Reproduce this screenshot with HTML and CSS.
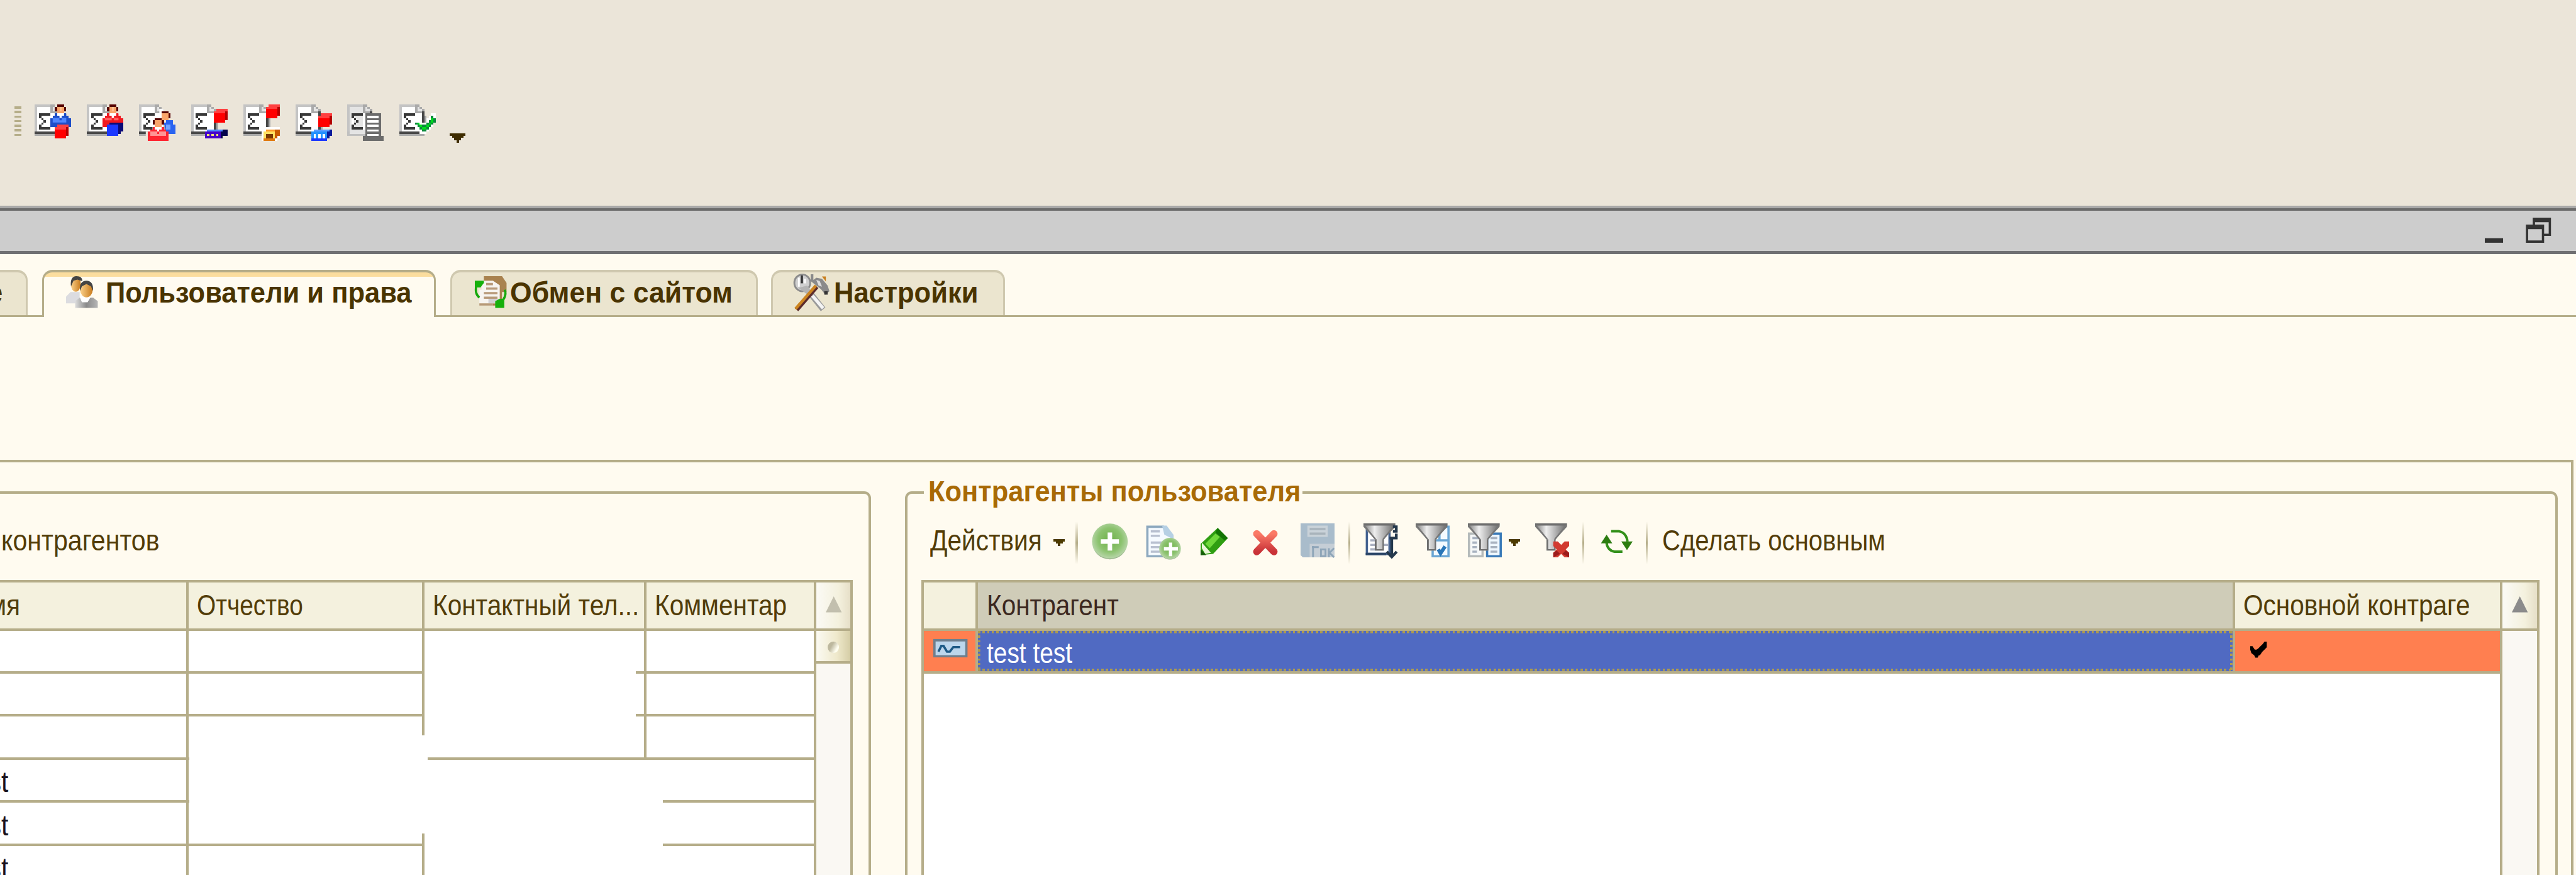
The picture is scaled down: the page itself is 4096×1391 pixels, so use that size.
FILE: index.html
```html
<!DOCTYPE html>
<html lang="ru">
<head>
<meta charset="utf-8">
<title>Пользователи и права</title>
<link rel="stylesheet" href="styles.css">
</head>
<body>
<svg class="defs" aria-hidden="true">
  <defs>
    <linearGradient id="metal" x1="0" x2="1" y1="0" y2="0"><stop offset="0" stop-color="#777"/><stop offset=".35" stop-color="#eee"/><stop offset=".6" stop-color="#bbb"/><stop offset="1" stop-color="#666"/></linearGradient>
    <radialGradient id="green" cx=".5" cy=".45" r=".6"><stop offset="0" stop-color="#6fb04a"/><stop offset=".55" stop-color="#8cc36f"/><stop offset=".85" stop-color="#b4d4a4"/><stop offset="1" stop-color="#55664f"/></radialGradient>
    <linearGradient id="red" x1="0" x2="0" y1="0" y2="1"><stop offset="0" stop-color="#fb7a66"/><stop offset="1" stop-color="#c93238"/></linearGradient>
    <linearGradient id="face" x1="0" x2="1" y1="0" y2="0"><stop offset="0" stop-color="#fbd28d"/><stop offset="1" stop-color="#c97b1c"/></linearGradient>
    <linearGradient id="coat" x1="0" x2="1" y1="0" y2="0"><stop offset="0" stop-color="#ddd"/><stop offset=".5" stop-color="#8a8a8a"/><stop offset="1" stop-color="#b5b5b5"/></linearGradient>
    <g id="sheet" shape-rendering="crispEdges">
      <path fill="#fff" d="M1 1h7v3h2v8H1z"/>
      <path fill="#c4c4c4" d="M0 0h9v1H1v11H0z"/>
      <path fill="#aaa" d="M7 0h1v3h3v1H7zM8 0h1v1H8zM9 1h1v1H9zM10 2h1v1h-1zM0 13h11v1H0z"/>
      <path fill="#e4e4e4" d="M8 1h1v1h1v1H8z"/>
      <path fill="#484848" d="M0 12h10v1H0zM10 3h1v9h-1z"/>
      <path fill="#aaa" d="M11 5h1v7h-1z"/>
      <path fill="#383838" d="M2 4h5v1H3v1H2zM3 6h1v1H3zM4 7h1v1H4zM3 8h1v1H3zM2 9h1v1h4v1H2z"/>
    </g>
    <g id="head" shape-rendering="crispEdges">
      <path fill="#fff" d="M10 4h3v2h-3z"/>
      <path fill="#f9a56b" d="M10 1h3v3h-3z"/><path fill="#ffc08e" d="M11 1h1v2h-1z"/>
      <path fill="#560000" d="M10 0h3v1h-3zM9 1h1v2H9zM13 1h1v2h-1z"/>
    </g>
    <path id="torso" shape-rendering="crispEdges" d="M8 5h1V4h1v1h1v1h1V5h1V4h1v1h1v1h1v4H7V6h1z"/>
    <g id="cube" shape-rendering="crispEdges"><path fill="#f00" d="M0 2h5v4H0z"/><path fill="#ff4040" d="M1 0h5v1H5v1H0V1h1z"/><path fill="#b40000" d="M5 1h1v4H5z"/></g>
    <g id="funnel">
      <path fill="url(#metal)" d="M0 0h14v1.5L9 7v5H5V7L0 1.5z"/><path fill="#6e6e6e" d="M0 0h14v1H0zM5 7h.8v5H5zM8.4 7H9v5h-.6zM5 11.4h4v.6H5z"/>
      <path fill="none" stroke="#777" stroke-width=".7" d="M.3 1l5 6M13.7 1l-5 6"/>
    </g>
  </defs>
</svg>

<header class="commands">
  <span class="grip"></span>
  <svg class="ico" viewBox="0 0 16 16"><use href="#sheet"/><use href="#torso" fill="#1d4ec8"/><use href="#head"/><path fill="#1d4ec8" d="M9 4h1v1h1v1h1V5h1V4h1v3H9z"/><path fill="#4f86ff" d="M8 6h3v1h1V6h2v2H8z"/><use href="#cube" x="9" y="9"/></svg>
  <svg class="ico" viewBox="0 0 16 16"><use href="#sheet"/><use href="#torso" fill="#f01820"/><use href="#head"/><path fill="#f01820" d="M9 4h1v1h1v1h1V5h1V4h1v3H9z"/><path fill="#ff6060" d="M8 6h3v1h1V6h2v1H8z"/><g shape-rendering="crispEdges"><path fill="#0a0a78" d="M10 8h6v4h-1v1h-1V9h-4z"/><path fill="#1c38ff" d="M9 9h5v5H9z"/></g></svg>
  <svg class="ico" viewBox="0 0 16 16"><use href="#sheet"/><path fill="#ebe5d9" d="M10 3h6v4h-2v-1h-4zM3 12h3v2H3zM11 6h3v2h-3z"/><path fill="#fff" d="M9 2h2v2H9zM6 7h5v6H6z"/><g shape-rendering="crispEdges"><path fill="#f9a56b" d="M10 4h3v3h-3zM7 7h3v3H7z"/><path fill="#560000" d="M10 3h3v1h1v2h-1V4h-3zM7 6h3v1h1v2h-1V7H7v2H6V7h1z"/><path fill="#2a64f0" d="M11 8h1V7h3v2h1v4h-4z"/><path fill="#75a4ff" d="M12 9h2v2h-2z"/><path fill="#ff2430" d="M5 11h1v-1h1v1h1v1h1v-1h1v-1h1v1h1v1h1v4H4v-4h1z"/><path fill="#ff9494" d="M5 12h3v1h1v-1h3v2H5z"/></g></svg>
  <svg class="ico" viewBox="0 0 16 16"><use href="#sheet"/><use href="#cube" x="10" y="2"/><g shape-rendering="crispEdges"><path fill="#4c86ff" d="M7 11h7v1H7z"/><path fill="#04044c" d="M14 11h2v3h-2v1h-1v-3h1z"/><path fill="#4600c8" d="M6 12h7v3H6z"/><path fill="#ffe070" d="M7 13h1v1H7zM9 13h1v1H9zM11 13h1v1h-1z"/></g></svg>
  <svg class="ico" viewBox="0 0 16 16"><use href="#sheet"/><use href="#cube" x="10"/><g shape-rendering="crispEdges"><path fill="#fff" d="M9 10h7v5h-1v1H8v-4h1z"/><path fill="#c85a00" d="M10 11h6v3h-1v1h-1v1H9v-4h1z"/><path fill="#ff9a28" d="M10 11h4v1h-4z"/><path fill="#ffe060" d="M9 12h5v3H9z"/><path fill="#7a3800" d="M10 13h3v2h-3z"/><path fill="#e07a10" d="M9 15h5v1H9z"/></g></svg>
  <svg class="ico" viewBox="0 0 16 16"><use href="#sheet"/><use href="#cube" x="10" y="4"/><g shape-rendering="crispEdges"><path fill="#0a1c9c" d="M14 11h2v3h-1v1h-1z"/><path fill="#5a9cff" d="M8 11h7v1H8z"/><path fill="#2492ff" d="M7 12h7v3H7z"/><path fill="#fff" d="M8 13h1v2H8zM10 13h1v2h-1zM12 13h1v2h-1z"/><path fill="#1c38ff" d="M7 15h7v1H7z"/></g></svg>
  <svg class="ico" viewBox="0 0 16 16"><use href="#sheet"/><g shape-rendering="crispEdges"><path fill="#e4e4e4" d="M1 1h6v3H2v7h6v1H1zM3 5h4v5H3z"/><path fill="#383838" d="M2 4h5v1H3v1H2zM3 6h1v1H3zM4 7h1v1H4zM3 8h1v1H3zM2 9h1v1h4v1H2z"/><path fill="#c0c0c0" d="M0 12h8v2H0z"/><path fill="#e4e4e4" d="M1 12h7v1H1z"/><path fill="#6c6c6c" d="M8 4h7v10h1v2H7v-2h1z"/><path fill="#fff" d="M9 5h5v1H9zM9 7h5v1H9zM9 9h5v1H9zM9 11h5v1H9zM9 13h5v1H9z"/></g></svg>
  <svg class="ico" viewBox="0 0 16 16"><use href="#sheet"/><g shape-rendering="crispEdges"><path fill="#fff" d="M6 7h3v1h3V6h1V5h1V4h2v4h-1v2h-1v1h-1v1h-1v1H9v-1H8v-1H7v-1H6z"/><path fill="#088a3a" d="M14 5h1v1h1v2h-1v1h-1v1h-1v1h-1v1h-2v-1H9v-1H8V9H7V8h2v1h3V8h1V7h1z"/><path fill="#00dc1e" d="M14 6h1v2h-1v1h-1v1h-1v1h-2v-1H9V9H8V8h1v1h1v1h2V9h1V8h1z"/></g></svg>
  <svg class="more" viewBox="0 0 7 4" shape-rendering="crispEdges"><path fill="#3e2c00" d="M0 0h7v1H6v1H5v1H4v1H3V3H2V2H1V1H0z"/></svg>
</header>

<div class="titlebar">
  <svg class="win" viewBox="0 0 116 44"><path fill="#333" d="M0 36h32v8H0z"/><path fill="#333" fill-rule="evenodd" d="M84 0h32v32h-12v-4h8V8H88v4h-4zM72 12h32v32H72zM76 20v20h24V20z"/></svg>
</div>

<main class="workspace">
  <nav class="tabs">
    <div class="tab tab-first"><span class="text bold">Общие</span></div>
    <div class="tab tab-active">
      <svg class="tabico small" viewBox="0 0 14 14"><path fill="#dcdce0" d="M0 9l2-2h4v5H0z"/><ellipse cx="4.300" cy="3.500" rx="2.200" ry="3.400" fill="url(#face)"/><path fill="#444" d="M2.200 4.500C1.800 1.500 2.800 0 4.600 0s2.600.8 2.600 2.200L5 1.500 3.300 2z"/><path fill="url(#coat)" d="M4 14v-3l2-1.500h6l2 1.500v3z"/><path fill="#fff" d="M6 9h5l-1.500 2.500H7z"/><ellipse cx="9" cy="5.800" rx="2.800" ry="3.600" fill="url(#face)"/><path fill="#444" d="M6.200 6.500C5.800 3.500 7 2 9 2s3.200 1.500 2.900 4.500L11 4.500 9 3.500l-2 1z"/></svg>
      <span class="text bold">Пользователи и права</span>
    </div>
    <div class="tab tab-exchange">
      <svg class="tabico small" viewBox="0 0 14 14"><path fill="#a9824f" d="M4 0h8l2 3v4h-2v6H8V3H4z"/><path fill="#f7f4f0" d="M3 2h5l3 2v8H2V6h1z"/><path fill="#d2d0d4" d="M6 10h5v2H6z"/><path stroke="#b89a7a" d="M5 3.500h3M5 5.500h5M4 7.500h6M4 9.500h6M2 12.500h6"/><path fill="none" stroke="#16a80c" d="M2 9.500C.3 8 .3 6.500.6 4M13.200 6c.6 1.500.3 3-.7 4.500"/><path fill="#16b00c" d="M0 2h4v1L2.500 5H0zM13 14H9v-3l2-1h2z"/></svg>
      <span class="text bold">Обмен с сайтом</span>
    </div>
    <div class="tab tab-settings">
      <svg class="tabico" viewBox="0 0 16 16"><path stroke="#9a9a9a" stroke-width="2.600" d="M7 8l6 7.500"/><path stroke="#f4f4f4" stroke-width="1.400" d="M7 8l6 7"/><ellipse cx="3.800" cy="3.800" rx="3.500" ry="3.700" fill="#d0d0d0" stroke="#8c8c8c" stroke-width=".8"/><path stroke="#333" d="M3.600.5v3.500"/><path stroke="#fff" stroke-width=".8" d="M2.300 1.500v4M5 2v2"/><path fill="#b4b4b4" d="M2 6l4-1 3 4-1.500 1z"/><path fill="#8a8a8a" d="M7.500 0h1.200v2.500l1.300-1 2.500.5L15 5l.8 2.500L14 9l-2-2.500L10 5 7.500 3z"/><path fill="#ddd" d="M10 2.500l1.500.5 1 2.500-1.500-.5z"/><path fill="#333" d="M13.500 7.500H15V9h-1.500z"/><path fill="#c98020" d="M12.500 1h1.700v2.200z"/><path stroke="#5c2c2c" stroke-width="1.900" d="M1.300 15.700L10.200 5.500"/><path stroke="#cc8420" stroke-width="1.300" d="M.8 15.300L9.800 5"/></svg>
      <span class="text bold">Настройки</span>
    </div>
  </nav>

  <section class="panel">
    <div class="group group-users">
      <div class="bar"><span class="text bar-tail">контрагентов</span></div>
      <div class="users">
        <div class="th c1"><span class="text">Имя</span></div><div class="th"><span class="text tight">Отчество</span></div><div class="th"><span class="text">Контактный тел...</span></div><div class="th"><span class="text">Комментар</span></div>
        <div class="td"></div><div class="td"></div><div class="td"></div><div class="td"></div>
        <div class="td"></div><div class="td"></div><div class="td"></div><div class="td"></div>
        <div class="td"></div><div class="td"></div><div class="td"></div><div class="td"></div>
        <div class="td c1"><span class="text">test</span></div><div class="td"></div><div class="td"></div><div class="td"></div>
        <div class="td c1"><span class="text">test</span></div><div class="td"></div><div class="td"></div><div class="td"></div>
        <div class="td c1"><span class="text">test</span></div><div class="td"></div><div class="td"></div><div class="td"></div>
        <div class="scroll">
          <div class="scroll-up"><svg class="tri" viewBox="0 0 7 7"><path fill="#c2bfae" d="M3.500 0L7 7H0z"/></svg></div>
          <div class="thumb"><span class="dot"></span></div>
        </div>
        <i class="blank blank-phone"></i><i class="blank blank-name"></i><i class="blank blank-rest"></i>
      </div>
    </div>

    <div class="group group-partners">
      <div class="legend"><span class="text bold">Контрагенты пользователя</span></div>
      <div class="bar">
        <span class="text actions">Действия</span>
        <svg class="drop" viewBox="0 0 5 3" shape-rendering="crispEdges"><path fill="#4d3a00" d="M0 0h5v1H4v1H3v1H2V2H1V1H0z"/></svg>
        <i class="sep"></i>
        <div class="icons">
          <svg class="ico" viewBox="0 0 16 16"><circle cx="8" cy="8" r="7.900" fill="url(#green)"/><path fill="#fff" d="M7 4h2v3h3v2H9v3H7V9H4V7h3z"/></svg>
          <svg class="ico" viewBox="0 0 16 16"><path fill="#f5faff" stroke="#8ea9bf" d="M1.500 1.500h7l4 4v9h-11z"/><path fill="#b6d0e4" d="M8 1h2l3 4v2l-4-2z"/><path stroke="#b8c0d0" d="M3 3.500h4M3 5.500h4M3 8.500h5M3 10.500h4M3 12.500h4"/><circle cx="11.500" cy="11.200" r="4.800" fill="url(#green)"/><path fill="#fff" d="M11 8.500h1.500v2H15V12h-2.500v2.500H11V12H8.800v-1.500H11z"/></svg>
          <svg class="ico" viewBox="0 0 16 16"><path fill="#2f9e12" d="M9.500 2L14 6.500 7.500 13.500 2 14V9z"/><path fill="#6ed83a" d="M8.500 4.500l2 1.500L6 11 4 9z"/><path fill="#137404" d="M9.500 2L14 6.500l-1.500 1L8.500 4z"/><path fill="#eaf6d8" d="M2.500 8.500L6.500 13 4 13.500 2.500 11z"/><path fill="#145c08" d="M2 11.500L4.500 14H2z"/></svg>
          <svg class="ico" viewBox="0 0 16 16"><path stroke="url(#red)" stroke-width="3.200" stroke-linecap="round" d="M3.700 4.600l7.600 7.900M11.300 4.600l-7.600 7.900"/></svg>
          <svg class="ico" viewBox="0 0 16 16"><path fill="#a9bccb" d="M0 0h15v15H1l-1-1z"/><path fill="#c9d2d9" d="M3 1h9v5H3z"/><path stroke="#a9b4bc" d="M4 2.500h7M4 4.500h7"/><path fill="#c5ced6" d="M4 9h11v6H4z"/><path stroke="#8ea5b8" fill="none" stroke-width=".8" d="M5.500 10v5M5 10.500h3M9 11.500h2v3H9zM12.500 11v4M14.800 11l-2 2 2 2"/></svg>
        </div>
        <i class="sep"></i>
        <div class="icons">
          <svg class="ico" viewBox="0 0 16 16"><path fill="#fff" stroke="#43618f" d="M1.500 2.500h10v11h-10z"/><path stroke="#2c4668" d="M1 13.500h9"/><path stroke="#aab0c0" d="M3 7.500h2M3 9.500h8M3 11.500h6"/><use href="#funnel"/><path stroke="#24384c" fill="none" stroke-width="1.200" d="M12.500 7v8M10.300 12.500l2.200 2.300 2.200-2.300M13 1.500h1.500v2H13M11.500 6.500h3v-2"/></svg>
          <svg class="ico" viewBox="0 0 16 16"><path fill="#f4faff" stroke="#6ba6d4" d="M7.500 7.500h7v7h-7zM10.500 1.500h4v6h-4z"/><path stroke="#2a76b8" stroke-width="1.600" fill="none" d="M10 11.500l1 1.700 2-3"/><use href="#funnel"/></svg>
          <svg class="ico" viewBox="0 0 16 16"><path fill="#f6f8f8" stroke="#b5baba" d="M.5 4.500h6v10h-6z"/><path fill="#eef7ff" stroke="#3a7ab8" d="M8.500 4.500h6v10h-6z"/><path stroke="#a8b2c0" d="M2 6.500h3M2 8.500h2M2 10.500h2M2 12.500h2M10 6.500h3M10 8.500h3M10 10.500h3M10 12.500h3"/><use href="#funnel"/></svg>
        </div>
        <svg class="drop drop-filter" viewBox="0 0 5 3" shape-rendering="crispEdges"><path fill="#4d3a00" d="M0 0h5v1H4v1H3v1H2V2H1V1H0z"/></svg>
        <svg class="ico clear" viewBox="0 0 16 16"><use href="#funnel"/><path fill="#d23a30" d="M8 8h2l1.500 1.500L13 8h2v2l-1.500 1.500L15 13v2h-2l-1.500-1.500L10 15H8v-2l1.500-1.500L8 10z"/><path fill="#9c1c1c" d="M8 15v-2l1.500-1L11 13.500zM15 15v-2l-1.500-1L12 13.500z"/></svg>
        <i class="sep"></i>
        <svg class="ico refresh" viewBox="0 0 16 16"><path fill="none" stroke="#33901a" stroke-width="1.100" d="M5.500 3.500H9c2 .3 3.500 2 3.700 4.500M10.500 12.500H7c-2-.3-3.500-2-3.500-4"/><path fill="#2c7c10" d="M1 8.800L3.500 5 6 8.800zM10 8h5l-2.500 3.800z"/></svg>
        <i class="sep"></i>
        <span class="text make-main">Сделать основным</span>
      </div>
      <div class="partners">
        <div class="th"></div><div class="th th-current"><span class="text">Контрагент</span></div><div class="th"><span class="text">Основной контраге</span></div>
        <div class="td mark"><svg class="rowico" viewBox="0 0 60 32"><path fill="#bcd6ec" stroke="#6d7f8e" stroke-width="4" d="M2 2h56v28H2z"/><path fill="none" stroke="#1d5a86" stroke-width="4" d="M9 22l5-10h4l6 10h5l6-8h12"/></svg></div>
        <div class="td cell-current"><span class="text tight">test test</span></div>
        <div class="td main"><svg class="check" viewBox="0 0 29 28"><path d="M0 8h4l4 6h3l3-2 4-4 4-4 3-4h4v10l-4 4-4 4-4 6h-2l-2 4h-4l-2-4-5-4-2-6z"/></svg></div>
        <div class="scroll"><div class="scroll-up"><svg class="tri" viewBox="0 0 7 7"><path fill="#8b8b8b" d="M3.500 0L7 7H0z"/></svg></div></div>
      </div>
    </div>
  </section>
</main>
</body>
</html>
```
FILE: styles.css
```css
* { box-sizing: border-box; }

:root {
  --line: 4.45px;
  --olive: #b5ad89;
  --cream: #fffbf0;
  --head: #f4f1de;
}

html { overflow: hidden; background: var(--cream); }

body {
  zoom: 0.9072;
  display: flex;
  flex-direction: column;
  width: 4515px;
  height: 1533px;
  margin: 0;
  overflow: hidden;
  background: var(--cream);
  color: #523c08;
  font: 51px/60px "Liberation Sans", Arial, sans-serif;
}

svg { display: block; flex: none; overflow: visible; }
.defs { position: absolute; width: 0; height: 0; }

.text {
  display: inline-block;
  flex: none;
  white-space: pre;
  transform: scaleX(0.877);
  transform-origin: 0 50%;
}
.tight { transform: scaleX(0.84); }
.bold { font-weight: bold; color: #4a3400; transform: scaleX(0.94); }
.ico { width: 63.5px; height: 63.5px; }

/* Command bar */
.commands {
  display: flex;
  flex: none;
  gap: 27.85px;
  height: 361px;
  padding: 182.5px 0 0 25px;
  background: #ebe5d9;
}
.grip {
  width: 12px;
  height: 52px;
  margin: 4px -3.8px 0 0;
  background: repeating-linear-gradient(#b5ad89 0 4px, transparent 4px 8px);
}
.more { width: 28px; height: 16px; margin: 51.5px 0 0 -3px; }

.titlebar {
  display: flex;
  flex: none;
  justify-content: flex-end;
  height: 84px;
  padding: 20.4px 44px 0 0;
  background: linear-gradient(#a8a8a8 0 4.5px, #6b6b6b 4.5px 8.9px, #cdcdcd 8.9px 79.8px, #707073 79.8px);
}
.win { width: 116px; height: 44px; }

/* Tabs */
.workspace { display: flex; flex: 1; flex-direction: column; min-height: 0; overflow: hidden; }
.tabs {
  display: flex;
  flex: none;
  height: 111px;
  padding-top: 27.5px;
  background: linear-gradient(var(--olive), var(--olive)) 0 100% / 100% 4px no-repeat;
}
.tab {
  display: flex;
  height: 79.5px;
  padding-top: 7px;
  border: var(--line) solid #cfc8af;
  border-right-width: 3.4px;
  border-left-width: 3.4px;
  border-bottom: 0;
  border-radius: 18px 18px 0 0;
  background: #ebe5cf;
}
.tab-first { justify-content: flex-end; width: 69px; margin-left: -20px; padding-right: 31px; }
.tab-active {
  width: 690.5px;
  height: 83.5px;
  margin-left: 24.5px;
  padding-left: 39px;
  border-color: var(--olive);
  background: linear-gradient(#fbdd9e 8px, var(--cream) 8px);
}
.tab-exchange { width: 539px; margin-left: 25px; padding-left: 40px; }
.tab-exchange .text { margin-left: -3px; transform: scaleX(0.963); }
.tab-settings { width: 409px; margin-left: 24px; padding-left: 36px; }
.tabico { width: 63.5px; height: 63.5px; margin: -3px 7px 0 0; }
.tabico.small { width: 55.6px; height: 55.6px; margin: 0 14px 0 0; }
.tab-exchange .tabico { margin-right: 9px; }
.tab .text { margin-top: -1px; }

/* Panel with the two group boxes */
.panel {
  display: flex;
  flex: 1;
  min-height: 0;
  width: 4531px;
  margin: 250px 0 0 -20px;
  padding-top: 51px;
  border: var(--line) solid var(--olive);
  border-width: var(--line) var(--line) 0 0;
}
.group {
  position: relative;
  flex: none;
  display: flex;
  flex-direction: column;
  border: var(--line) solid var(--olive);
  border-bottom: 0;
  border-radius: 12px 12px 0 0;
}
.group-users { width: 1547px; padding-right: 28px; border-left: 0; border-top-left-radius: 0; }
.group-partners { width: 2896.5px; margin-left: 59.5px; padding: 0 27.5px 0 23.5px; }
.legend {
  position: absolute;
  top: -35px;
  left: 28px;
  width: 664px;
  height: 60px;
  padding-left: 8px;
  background: var(--cream);
}
.legend .text { color: #a86a06; }

.bar { display: flex; flex: none; align-items: center; height: 64px; margin: 51px 0 36px; }
.bar .text { margin-top: -4px; }
.bar-tail { margin-left: 22px; transform: scaleX(0.89); }
.actions { width: 216px; margin-left: 16px; }
.make-main { transform: scaleX(0.866); }
.drop { width: 20px; height: 12px; margin-top: 4px; }
.drop-filter { margin-left: 8px; }
.sep {
  flex: none;
  width: 3.5px;
  height: 76px;
  margin: 5px 25px 0 19px;
  background: linear-gradient(transparent, #b5ad89 50%, transparent);
}
.icons { display: flex; gap: 27.85px; }
.icons + .sep { margin-left: 21px; margin-right: 23px; }
.clear { margin-left: 27px; }

/* Tables */
.th, .td {
  min-width: 0;
  overflow: hidden;
  border: solid var(--olive);
  border-width: 0 var(--line) var(--line) 0;
}
.th { padding: 9px 0 0 15px; background: var(--head); }
.td { padding: 9px 0 0 15px; background: #fff; color: #1a1420; }

.users {
  position: relative;
  flex: 1;
  min-height: 0;
  overflow: hidden;
  display: grid;
  grid-template: 84px repeat(6, 75.45px) / 350.5px 413px 389.5px 298px 63.5px;
  border-top: var(--line) solid var(--olive);
}
.users .c1 { display: flex; padding-left: 0; }
.th.c1 .text { margin-left: -32px; }
.td.c1 .text { margin-left: -37px; }
.scroll {
  grid-row: 1 / -1;
  border-right: var(--line) solid var(--olive);
  background: #faf8f3;
}
.users .scroll { grid-column: 5; }
.scroll-up {
  height: 84px;
  padding: 24px 0 0 16px;
  border-bottom: var(--line) solid var(--olive);
  background: linear-gradient(90deg, #fbfaf5, #f4f1de 65%, #e6dfc8);
}
.tri { width: 28px; height: 28px; }
.thumb {
  height: 58px;
  padding: 19px 0 0 20px;
  border-bottom: var(--line) solid var(--olive);
  background: linear-gradient(90deg, #fbfaf2, #efe9cc 60%, #d5cda6);
}
.dot { display: block; width: 19px; height: 20px; border-radius: 50%; background: linear-gradient(120deg, #bdb89e 35%, #fffef0 75%); }

/* Cleared areas of the user list */
.blank { position: absolute; background: #fff; }
.blank-phone { left: 763.5px; top: 84px; width: 371px; height: 222px; }
.blank-name { left: 352px; top: 267px; width: 418px; height: 172px; }
.blank-rest { left: 763.5px; top: 310px; width: 418px; height: 220px; }

.partners {
  flex: 1;
  min-height: 0;
  display: grid;
  grid-template: 84px 75px 1fr / 95.5px 2203px 469px 1fr;
  border: solid var(--olive);
  border-width: var(--line) 0 0 var(--line);
  background: #fff;
}
.partners .scroll { grid-row: 1 / -1; grid-column: 4; border-left: 0; }
.partners::after { content: ""; grid-area: 3 / 1 / 4 / 4; border-right: var(--line) solid var(--olive); }
.th-current { background: #cfccb8; color: #3c2820; }
.mark, .main { background: #ff7f50; }
.mark { padding: 15px 0 0 17px; }
.rowico { width: 60px; height: 32px; }
.main { padding: 19px 0 0 27px; }
.check { width: 29px; height: 28px; }
.cell-current {
  color: #fff;
  background:
    repeating-linear-gradient(90deg, #b09c4c 0 4px, transparent 4px 8px) 0 0 / 100% 4px no-repeat,
    repeating-linear-gradient(90deg, #b09c4c 0 4px, transparent 4px 8px) 0 100% / 100% 4px no-repeat,
    repeating-linear-gradient(#b09c4c 0 4px, transparent 4px 8px) 0 0 / 4px 100% no-repeat,
    repeating-linear-gradient(#b09c4c 0 4px, transparent 4px 8px) 100% 0 / 4px 100% no-repeat,
    #506ac2;
}
```
